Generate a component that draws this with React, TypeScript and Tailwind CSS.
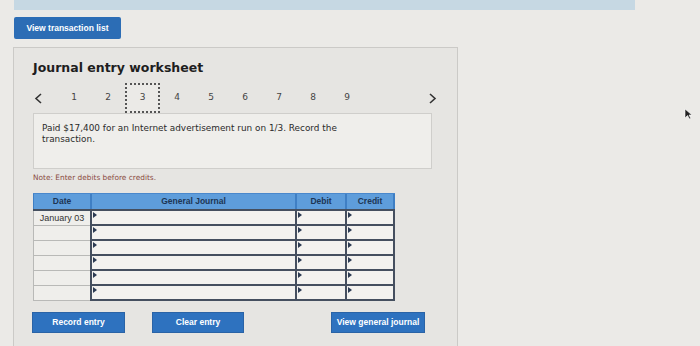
import React from "react";

const Flag = () => (
  <span className="absolute left-[1px] top-[1px] w-0 h-0 border-t-[3px] border-b-[3px] border-l-[4px] border-t-transparent border-b-transparent border-l-[#2b3a52]" />
);

function Row({ date }: { date?: string }) {
  return (
    <div className="flex h-[15px]">
      <div className="w-[57px] border-l border-b border-[#b9b9b7] bg-[#efeeeb] text-[9px] text-[#333] flex items-center justify-center leading-none">
        {date}
      </div>
      <div className="relative w-[205px] border-l-2 border-b-2 border-[#454f5f] bg-[#f3f2ef]">
        <Flag />
      </div>
      <div className="relative w-[50px] border-l-2 border-b-2 border-[#454f5f] bg-[#f3f2ef]">
        <Flag />
      </div>
      <div className="relative w-[50px] border-l-2 border-r-2 border-b-2 border-[#454f5f] bg-[#f3f2ef]">
        <Flag />
      </div>
    </div>
  );
}

export default function App() {
  const nums = [1, 2, 3, 4, 5, 6, 7, 8, 9];
  return (
    <div
      className="relative w-[700px] h-[346px] overflow-hidden bg-[#ebeae7]"
      style={{ fontFamily: '"Liberation Sans", Arial, sans-serif' }}
    >
      <div className="ml-[14px] w-[621px] h-[10px] bg-[#c6d8e3]" />
      <div className="ml-[14px] mt-[7px] w-[107px] h-[22px] bg-[#2c6db5] rounded-[2px] flex items-center justify-center text-white font-bold text-[8.5px]">
        View transaction list
      </div>
      <div className="ml-[13px] mt-[8px] w-[445px] h-[310px] border border-[#cbcac7] bg-[#e6e5e2] pl-[19px]">
        <div
          className="pt-[12px] text-[12.5px] font-bold text-[#1e1e1e] leading-[15px]"
          style={{ fontFamily: '"DejaVu Sans", Verdana, sans-serif' }}
        >
          Journal entry worksheet
        </div>
        <div className="mt-[8px] flex h-[30px] items-center text-[9px] text-[#444]"
          style={{ fontFamily: '"DejaVu Sans", Verdana, sans-serif' }}>
          <div className="w-[24px] pl-[1px]">
            <svg width="9" height="11" viewBox="0 0 9 11">
              <path d="M7 1 L2 5.5 L7 10" fill="none" stroke="#333" strokeWidth="1.6" />
            </svg>
          </div>
          {nums.map((n) =>
            n === 3 ? (
              <div key={n} className="w-[35px] h-[30px] flex items-center justify-center border-2 border-dotted border-[#555] bg-[#ebeae7]">
                {n}
              </div>
            ) : (
              <div key={n} className="w-[34px] flex items-center justify-center">
                {n}
              </div>
            )
          )}
          <div className="ml-[64px]">
            <svg width="9" height="11" viewBox="0 0 9 11">
              <path d="M2 1 L7 5.5 L2 10" fill="none" stroke="#333" strokeWidth="1.6" />
            </svg>
          </div>
        </div>
        <div
          className="w-[399px] h-[56px] border border-[#cfcecb] bg-[#efeeeb] pl-[8px] pt-[9px] text-[8.9px] leading-[11px] text-[#2a2a2a]"
          style={{ fontFamily: '"DejaVu Sans", Verdana, sans-serif' }}
        >
          Paid $17,400 for an Internet advertisement run on 1/3. Record the
          <br />
          transaction.
        </div>
        <div
          className="mt-[4px] text-[7.4px] leading-[10px] text-[#8a4a3e]"
          style={{ fontFamily: '"DejaVu Sans", Verdana, sans-serif' }}
        >
          Note: Enter debits before credits.
        </div>
        <div className="mt-[10px] w-[362px]">
          <div className="flex h-[16px] bg-[#5e9ddb] text-[8.5px] font-bold text-[#1d3554] border-t border-[#4a88cc]">
            <div className="w-[57px] border-l border-[#3f7fc4] flex items-center justify-center">Date</div>
            <div className="w-[205px] border-l-2 border-[#3f7fc4] flex items-center justify-center">General Journal</div>
            <div className="w-[50px] border-l-2 border-[#3f7fc4] flex items-center justify-center">Debit</div>
            <div className="w-[50px] border-l-2 border-r-2 border-[#3f7fc4] flex items-center justify-center">Credit</div>
          </div>
          <div className="border-t-2 border-[#454f5f]" />
          <Row date="January 03" />
          <Row />
          <Row />
          <Row />
          <Row />
          <Row />
        </div>
        <div className="mt-[11px] flex text-white font-bold text-[8.5px]">
          <div className="w-[93px] h-[21px] bg-[#2e72bf] flex items-center justify-center border border-[#2a63a6] -ml-[1px]">
            Record entry
          </div>
          <div className="ml-[27px] w-[92px] h-[21px] bg-[#2e72bf] flex items-center justify-center border border-[#2a63a6]">
            Clear entry
          </div>
          <div className="ml-[87px] w-[94px] h-[21px] bg-[#2e72bf] flex items-center justify-center border border-[#2a63a6]">
            View general journal
          </div>
        </div>
      </div>
      <svg className="absolute left-[684px] top-[108px]" width="9" height="12" viewBox="0 0 9 12">
        <path d="M1 1 L1 10 L3.5 7.5 L5.5 11 L6.8 10.3 L5 7 L8 7 Z" fill="#222" stroke="#fff" strokeWidth="0.6" />
      </svg>
    </div>
  );
}
